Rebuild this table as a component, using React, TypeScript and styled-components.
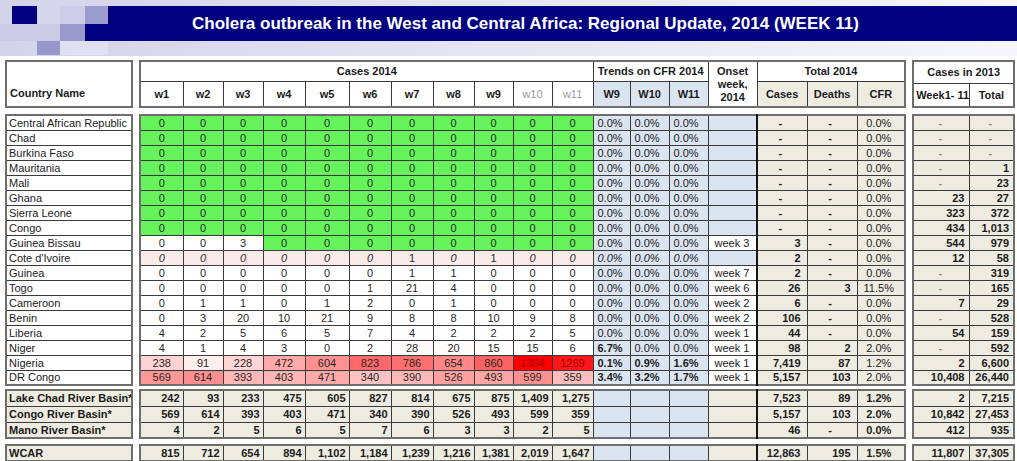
import React from 'react';
import styled, { createGlobalStyle, css } from 'styled-components';

const GREEN = '#66f35c';
const BLUE = '#dbe5f1';
const BEIGE = '#eeece1';
const PINK = '#fbeaea';
const LINE = '#3a3a3a';

const GlobalStyle = createGlobalStyle`
  html, body {
    margin: 0;
    padding: 0;
    background: #fff;
  }
  body {
    font-family: "Liberation Sans", Arial, sans-serif;
    color: #1b1b1b;
  }
`;

type Country = {
    name: string;
    weeks: number[];
    greenFrom?: number;
    faint?: boolean;
    trends?: string[];
    boldTrends?: boolean[];
    onset?: string;
    cases: string;
    deaths: string;
    cfr: string;
    prevWeeks: string;
    prevTotal: string;
};

type Basin = {
    name: string;
    weeks: string[];
    cases: string;
    deaths: string;
    cfr: string;
    prevWeeks: string;
    prevTotal: string;
};

const Z = Array(11).fill(0);
const clear = (name: string, prevWeeks: string, prevTotal: string): Country => ({
    name,
    weeks: Z,
    greenFrom: 0,
    cases: '-',
    deaths: '-',
    cfr: '0.0%',
    prevWeeks,
    prevTotal,
});

const countries: Country[] = [
    clear('Central African Republic', '-', '-'),
    clear('Chad', '-', '-'),
    clear('Burkina Faso', '-', '-'),
    clear('Mauritania', '-', '1'),
    clear('Mali', '-', '23'),
    clear('Ghana', '23', '27'),
    clear('Sierra Leone', '323', '372'),
    clear('Congo', '434', '1,013'),
    { name: 'Guinea Bissau', weeks: [0, 0, 3, 0, 0, 0, 0, 0, 0, 0, 0], greenFrom: 3, onset: 'week 3', cases: '3', deaths: '-', cfr: '0.0%', prevWeeks: '544', prevTotal: '979' },
    { name: "Cote d'Ivoire", weeks: [0, 0, 0, 0, 0, 0, 1, 0, 1, 0, 0], faint: true, cases: '2', deaths: '-', cfr: '0.0%', prevWeeks: '12', prevTotal: '58' },
    { name: 'Guinea', weeks: [0, 0, 0, 0, 0, 0, 1, 1, 0, 0, 0], onset: 'week 7', cases: '2', deaths: '-', cfr: '0.0%', prevWeeks: '-', prevTotal: '319' },
    { name: 'Togo', weeks: [0, 0, 0, 0, 0, 1, 21, 4, 0, 0, 0], onset: 'week 6', cases: '26', deaths: '3', cfr: '11.5%', prevWeeks: '-', prevTotal: '165' },
    { name: 'Cameroon', weeks: [0, 1, 1, 0, 1, 2, 0, 1, 0, 0, 0], onset: 'week 2', cases: '6', deaths: '-', cfr: '0.0%', prevWeeks: '7', prevTotal: '29' },
    { name: 'Benin', weeks: [0, 3, 20, 10, 21, 9, 8, 8, 10, 9, 8], onset: 'week 2', cases: '106', deaths: '-', cfr: '0.0%', prevWeeks: '-', prevTotal: '528' },
    { name: 'Liberia', weeks: [4, 2, 5, 6, 5, 7, 4, 2, 2, 2, 5], onset: 'week 1', cases: '44', deaths: '-', cfr: '0.0%', prevWeeks: '54', prevTotal: '159' },
    { name: 'Niger', weeks: [4, 1, 4, 3, 0, 2, 28, 20, 15, 15, 6], trends: ['6.7%', '0.0%', '0.0%'], boldTrends: [true, false, false], onset: 'week 1', cases: '98', deaths: '2', cfr: '2.0%', prevWeeks: '-', prevTotal: '592' },
    { name: 'Nigeria', weeks: [238, 91, 228, 472, 604, 823, 786, 654, 860, 1394, 1269], trends: ['0.1%', '0.9%', '1.6%'], boldTrends: [true, true, true], onset: 'week 1', cases: '7,419', deaths: '87', cfr: '1.2%', prevWeeks: '2', prevTotal: '6,600' },
    { name: 'DR Congo', weeks: [569, 614, 393, 403, 471, 340, 390, 526, 493, 599, 359], trends: ['3.4%', '3.2%', '1.7%'], boldTrends: [true, true, true], onset: 'week 1', cases: '5,157', deaths: '103', cfr: '2.0%', prevWeeks: '10,408', prevTotal: '26,440' },
];

const basins: Basin[] = [
    { name: 'Lake Chad River Basin*', weeks: ['242', '93', '233', '475', '605', '827', '814', '675', '875', '1,409', '1,275'], cases: '7,523', deaths: '89', cfr: '1.2%', prevWeeks: '2', prevTotal: '7,215' },
    { name: 'Congo River Basin*', weeks: ['569', '614', '393', '403', '471', '340', '390', '526', '493', '599', '359'], cases: '5,157', deaths: '103', cfr: '2.0%', prevWeeks: '10,842', prevTotal: '27,453' },
    { name: 'Mano River Basin*', weeks: ['4', '2', '5', '6', '5', '7', '6', '3', '3', '2', '5'], cases: '46', deaths: '-', cfr: '0.0%', prevWeeks: '412', prevTotal: '935' },
];

const wcar: Basin = {
    name: 'WCAR',
    weeks: ['815', '712', '654', '894', '1,102', '1,184', '1,239', '1,216', '1,381', '2,019', '1,647'],
    cases: '12,863',
    deaths: '195',
    cfr: '1.5%',
    prevWeeks: '11,807',
    prevTotal: '37,305',
};

const weekWidths = [43, 40, 40, 42, 44, 42, 42, 41, 39, 39, 41];
const mainWidths = [...weekWidths, 37, 39, 39, 49, 50, 50, 48];
const prevWidths = [56, 45];

// white -> red colour scale, as the spreadsheet does on weekly counts
const heat = (v: number) => {
    const t = Math.min(v / 1394, 1);
    const g = Math.round(255 - 255 * t);
    return `rgb(255, ${g}, ${g})`;
};

const Page = styled.div`
    width: 1017px;
    height: 461px;
    overflow: hidden;
    background: #fff;
`;

const Banner = styled.header`
    display: flex;
    height: 56px;
    background: linear-gradient(90deg, #d3d3ea 0%, #e4e4f3 45%, #f6f6fc 100%);
`;

const TitleBand = styled.h1`
    flex: 1;
    display: flex;
    align-items: center;
    height: 35px;
    margin: 6px 0 0;
    padding-left: 84px;
    background: #000080;
    color: #fff;
    font-family: "Liberation Sans", Arial, sans-serif;
    font-size: 17px;
    font-weight: 700;
    white-space: nowrap;
`;

const Sheet = styled.div`
    padding-left: 5px;
    margin-top: 4px;
`;

const Band = styled.div<{ $gap: number }>`
    display: flex;
    align-items: flex-start;
    gap: 6px;
    margin-top: ${(p) => p.$gap}px;
`;

const Box = styled.table<{ $w: number }>`
    width: ${(p) => p.$w}px;
    table-layout: fixed;
    border-collapse: collapse;
    border: 2px solid #6e6e6e;
    font-family: "Liberation Sans", Arial, sans-serif;
    font-size: 11px;
    color: #1b1b1b;
`;

const Line = styled.tr<{ $h: number }>`
    height: ${(p) => p.$h}px;
`;

const base = css`
    border: 1px solid ${LINE};
    padding: 0 2px;
    line-height: 12px;
    white-space: nowrap;
    overflow: hidden;
`;

const HeadCell = styled.th<{ $bg?: string; $ink?: string; $light?: boolean; $align?: string; $valign?: string }>`
    ${base};
    background: ${(p) => p.$bg ?? '#fff'};
    color: ${(p) => p.$ink ?? '#1b1b1b'};
    font-weight: ${(p) => (p.$light ? 400 : 700)};
    text-align: ${(p) => p.$align ?? 'center'};
    vertical-align: ${(p) => p.$valign ?? 'middle'};
`;

const OnsetHead = styled(HeadCell)`
    line-height: 13px;
    padding-top: 1px;
`;

const CountryHead = styled(HeadCell)`
    padding: 0 0 7px 3px;
`;

const NameCell = styled.td<{ $strong?: boolean }>`
    ${base};
    padding-left: 2px;
    background: ${(p) => (p.$strong ? BEIGE : '#fff')};
    font-weight: ${(p) => (p.$strong ? 700 : 400)};
`;

const WeekCell = styled.td<{ $bg: string; $ink?: string; $italic?: boolean; $strong?: boolean }>`
    ${base};
    background: ${(p) => p.$bg};
    color: ${(p) => p.$ink ?? '#1f2a1f'};
    font-style: ${(p) => (p.$italic ? 'italic' : 'normal')};
    font-weight: ${(p) => (p.$strong ? 700 : 400)};
    text-align: ${(p) => (p.$strong ? 'right' : 'center')};
    padding-right: ${(p) => (p.$strong ? 3 : 2)}px;
`;

const TrendCell = styled.td<{ $bold?: boolean; $italic?: boolean }>`
    ${base};
    padding-left: 4px;
    background: ${BLUE};
    font-weight: ${(p) => (p.$bold ? 700 : 400)};
    font-style: ${(p) => (p.$italic ? 'italic' : 'normal')};
`;

const OnsetCell = styled.td<{ $bg: string }>`
    ${base};
    padding-left: 6px;
    background: ${(p) => p.$bg};
`;

const TotalCell = styled.td<{ $align?: string; $bold?: boolean; $divider?: boolean }>`
    ${base};
    padding-right: 6px;
    background: ${BEIGE};
    text-align: ${(p) => p.$align ?? 'right'};
    font-weight: ${(p) => (p.$bold ? 700 : 400)};
    ${(p) => p.$divider && `border-left: 2px solid #141414;`}
`;

const PrevCell = styled.td<{ $dash?: boolean }>`
    ${base};
    padding-right: 4px;
    background: ${BEIGE};
    text-align: ${(p) => (p.$dash ? 'center' : 'right')};
    font-weight: 700;
    color: ${(p) => (p.$dash ? '#8a8a8a' : '#1b1b1b')};
`;

const Logo = () => (
    <svg width="108" height="56" viewBox="0 0 108 56" aria-hidden>
        <rect x="0" y="24" width="60" height="17" fill="#cbcbe7" />
        <rect x="12" y="6" width="25" height="18" fill="#000080" />
        <rect x="60" y="6" width="25" height="18" fill="#cdcde9" />
        <rect x="85" y="6" width="23" height="18" fill="#9b9bd0" />
        <rect x="60" y="24" width="25" height="17" fill="#9999cc" />
        <rect x="85" y="24" width="23" height="17" fill="#000080" />
        <rect x="37" y="41" width="23" height="14" fill="#9797cb" />
        <rect x="60" y="41" width="48" height="14" fill="#e0e0f1" />
    </svg>
);

const Cols = ({ widths }: { widths: number[] }) => (
    <colgroup>
        {widths.map((w, i) => (
            <col key={i} style={{ width: w }} />
        ))}
    </colgroup>
);

const dash = (v: string) => v === '-';

const MainHeader = () => (
    <Box $w={765}>
        <Cols widths={mainWidths} />
        <thead>
            <Line $h={20}>
                <HeadCell colSpan={11}>Cases 2014</HeadCell>
                <HeadCell colSpan={3}>Trends on CFR 2014</HeadCell>
                <OnsetHead rowSpan={2}>
                    Onset
                    <br />
                    week,
                    <br />
                    2014
                </OnsetHead>
                <HeadCell colSpan={3}>Total 2014</HeadCell>
            </Line>
            <Line $h={26}>
                {weekWidths.map((_, i) => (
                    <HeadCell key={i} $light={i > 8} $ink={i > 8 ? '#9a9a9a' : undefined}>
                        w{i + 1}
                    </HeadCell>
                ))}
                {['W9', 'W10', 'W11'].map((w) => (
                    <HeadCell key={w} $bg={BLUE}>
                        {w}
                    </HeadCell>
                ))}
                {['Cases', 'Deaths', 'CFR'].map((w) => (
                    <HeadCell key={w} $bg={BEIGE}>
                        {w}
                    </HeadCell>
                ))}
            </Line>
        </thead>
    </Box>
);

const CountryWeeks = ({ c }: { c: Country }) => (
    <>
        {c.weeks.map((v, i) => {
            const green = c.greenFrom !== undefined && i >= c.greenFrom;
            const bg = green ? GREEN : c.faint ? PINK : heat(v);
            const ink = !green && v > 1200 ? '#9a0000' : undefined;
            return (
                <WeekCell key={i} $bg={bg} $ink={ink} $italic={c.faint && v === 0}>
                    {v}
                </WeekCell>
            );
        })}
    </>
);

const MainBody = () => (
    <Box $w={765}>
        <Cols widths={mainWidths} />
        <tbody>
            {countries.map((c) => (
                <Line key={c.name} $h={15}>
                    <CountryWeeks c={c} />
                    {(c.trends ?? ['0.0%', '0.0%', '0.0%']).map((t, i) => (
                        <TrendCell key={i} $bold={c.boldTrends?.[i]} $italic={c.faint}>
                            {t}
                        </TrendCell>
                    ))}
                    <OnsetCell $bg={c.onset ? '#fff' : BLUE}>{c.onset}</OnsetCell>
                    <TotalCell $divider $bold $align={dash(c.cases) ? 'center' : 'right'}>
                        {c.cases}
                    </TotalCell>
                    <TotalCell $bold $align={dash(c.deaths) ? 'center' : 'right'}>
                        {c.deaths}
                    </TotalCell>
                    <TotalCell $align="center">{c.cfr}</TotalCell>
                </Line>
            ))}
        </tbody>
    </Box>
);

const BasinBody = ({ rows, h }: { rows: Basin[]; h: number }) => (
    <Box $w={765}>
        <Cols widths={mainWidths} />
        <tbody>
            {rows.map((b) => (
                <Line key={b.name} $h={h}>
                    {b.weeks.map((v, i) => (
                        <WeekCell key={i} $bg={BEIGE} $ink="#1b1b1b" $strong>
                            {v}
                        </WeekCell>
                    ))}
                    <TrendCell />
                    <TrendCell />
                    <TrendCell />
                    <OnsetCell $bg={BEIGE} />
                    <TotalCell $divider $bold>
                        {b.cases}
                    </TotalCell>
                    <TotalCell $bold $align={dash(b.deaths) ? 'center' : 'right'}>
                        {b.deaths}
                    </TotalCell>
                    <TotalCell $bold $align="center">
                        {b.cfr}
                    </TotalCell>
                </Line>
            ))}
        </tbody>
    </Box>
);

const NameBox = ({ names, h, strong }: { names: string[]; h: number; strong?: boolean }) => (
    <Box $w={128}>
        <tbody>
            {names.map((n) => (
                <Line key={n} $h={h}>
                    <NameCell $strong={strong}>{n}</NameCell>
                </Line>
            ))}
        </tbody>
    </Box>
);

const PrevBox = ({ rows, h }: { rows: { name: string; prevWeeks: string; prevTotal: string }[]; h: number }) => (
    <Box $w={101}>
        <Cols widths={prevWidths} />
        <tbody>
            {rows.map((r) => (
                <Line key={r.name} $h={h}>
                    <PrevCell $dash={dash(r.prevWeeks)}>{r.prevWeeks}</PrevCell>
                    <PrevCell $dash={dash(r.prevTotal)}>{r.prevTotal}</PrevCell>
                </Line>
            ))}
        </tbody>
    </Box>
);

const App = () => (
    <Page>
        <GlobalStyle />
        <Banner>
            <Logo />
            <TitleBand>Cholera outbreak in the West and Central Africa: Regional Update, 2014 (WEEK 11)</TitleBand>
        </Banner>
        <Sheet>
            <Band $gap={0}>
                <Box $w={128}>
                    <thead>
                        <Line $h={46}>
                            <CountryHead $align="left" $valign="bottom">
                                Country Name
                            </CountryHead>
                        </Line>
                    </thead>
                </Box>
                <MainHeader />
                <Box $w={101}>
                    <Cols widths={prevWidths} />
                    <thead>
                        <Line $h={22}>
                            <HeadCell colSpan={2}>Cases in 2013</HeadCell>
                        </Line>
                        <Line $h={24}>
                            <HeadCell>Week1- 11</HeadCell>
                            <HeadCell>Total</HeadCell>
                        </Line>
                    </thead>
                </Box>
            </Band>
            <Band $gap={6}>
                <NameBox names={countries.map((c) => c.name)} h={15} />
                <MainBody />
                <PrevBox rows={countries} h={15} />
            </Band>
            <Band $gap={3}>
                <NameBox names={basins.map((b) => b.name)} h={16} strong />
                <BasinBody rows={basins} h={16} />
                <PrevBox rows={basins} h={16} />
            </Band>
            <Band $gap={5}>
                <NameBox names={[wcar.name]} h={16} strong />
                <BasinBody rows={[wcar]} h={16} />
                <PrevBox rows={[wcar]} h={16} />
            </Band>
        </Sheet>
    </Page>
);

export default App;
